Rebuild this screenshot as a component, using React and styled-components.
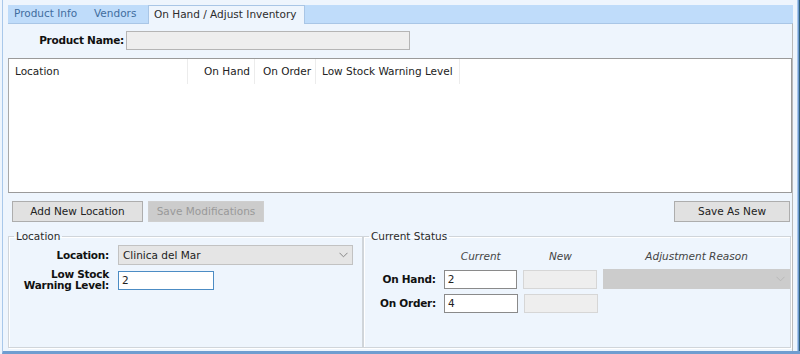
import styled, { createGlobalStyle } from 'styled-components';

const GlobalStyle = createGlobalStyle`
    html, body {
        margin: 0;
        padding: 0;
        background: #eef5fd;
    }
    body {
        font-family: "DejaVu Sans", Verdana, sans-serif;
        font-size: 10.5px;
        color: #262626;
    }
`;

const Frame = styled.div`
    width: 798px;
    height: 354px;
    box-sizing: border-box;
    background: #eef5fd;
    border-left: 1px solid #a9c8ea;
    border-bottom: 3px solid #6f9dd0;
    margin-left: 2px;
    padding: 5px 7px 0 5px;
    display: flex;
    flex-direction: column;
    position: relative;
`;

const EdgeStripe = styled.div`
    position: absolute;
    right: 0;
    top: 0;
    bottom: 0;
    width: 3px;
    background: linear-gradient(to right, #a8c8ec 0, #a8c8ec 1px, #6d9ad0 1px, #6d9ad0 2px, #2f5f78 2px);
`;

const TabStrip = styled.div`
    display: flex;
    align-items: flex-end;
    height: 18px;
    background: #bfdcfa;
`;

const Tab = styled.div`
    width: ${(p) => p.$width}px;
    height: ${(p) => (p.$active ? '19px' : '18px')};
    box-sizing: border-box;
    padding-left: ${(p) => (p.$active ? '5px' : '6px')};
    white-space: nowrap;
    line-height: 17px;
    color: ${(p) => (p.$active ? '#2c2c2c' : '#3f6d9e')};
    background: ${(p) => (p.$active ? '#eef5fd' : 'transparent')};
    border: ${(p) => (p.$active ? '1px solid #a9c6e6' : 'none')};
    border-bottom: none;
    margin-bottom: ${(p) => (p.$active ? '-1px' : '0')};
    position: relative;
`;

const Panel = styled.div`
    flex: 1;
    border-top: 1px solid #a9c6e6;
    border-right: 1px solid #b9b9b9;
    display: flex;
    flex-direction: column;
    padding-bottom: 3px;
`;

const NameRow = styled.div`
    display: flex;
    align-items: center;
    height: 18px;
    margin-top: 7px;
    margin-bottom: 9px;
`;

const FieldLabel = styled.label`
    font-weight: bold;
    letter-spacing: -0.25px;
    text-align: right;
    width: ${(p) => p.$width}px;
    padding-right: 2px;
    box-sizing: border-box;
    line-height: 11px;
    color: #111;
`;

const TextBox = styled.div`
    box-sizing: border-box;
    width: ${(p) => p.$width}px;
    height: 19px;
    border: 1px solid ${(p) => (p.$focus ? '#4c8cc4' : p.$disabled ? '#d6d6d6' : '#8a8a8a')};
    background: ${(p) => (p.$disabled ? '#eeeeee' : '#ffffff')};
    padding: 0 3px;
    line-height: 17px;
    color: #222;
`;

const NameBox = styled(TextBox)`
    border-color: #b5b5b5;
`;

const Grid = styled.div`
    height: 135px;
    box-sizing: border-box;
    background: #ffffff;
    border: 1px solid #9a9a9a;
    border-left-color: #a8a8a8;
`;

const HeaderRow = styled.div`
    display: flex;
    height: 25px;
`;

const HeaderCell = styled.div`
    width: ${(p) => p.$width}px;
    box-sizing: border-box;
    border-right: 1px solid #ececec;
    text-align: ${(p) => (p.$right ? 'right' : 'left')};
    padding: 0 ${(p) => (p.$right ? '4px' : '6px')};
    line-height: 25px;
    white-space: nowrap;
    color: #222;
`;

const ButtonRow = styled.div`
    display: flex;
    gap: 5px;
    padding: 0 2px 0 4px;
    margin-top: 8px;
`;

const Button = styled.div`
    box-sizing: border-box;
    width: ${(p) => p.$width}px;
    height: 21px;
    line-height: 19px;
    text-align: center;
    border: 1px solid ${(p) => (p.$disabled ? '#cfcfcf' : '#adadad')};
    background: ${(p) => (p.$disabled ? '#cccccc' : '#e1e1e1')};
    color: ${(p) => (p.$disabled ? '#999999' : '#222')};
    ${(p) => (p.$push ? 'margin-left: auto;' : '')}
`;

const Sections = styled.div`
    flex: 1;
    display: flex;
    margin-top: 9px;
`;

const Fieldset = styled.fieldset`
    margin: 0;
    padding: 0;
    flex: 0 0 ${(p) => p.$width}px;
    box-sizing: border-box;
    border: 1px solid #d0d5da;
    box-shadow: inset 1px 1px 0 #ffffff, 1px 1px 0 #ffffff;
    min-width: 0;
    display: flex;
    flex-direction: column;

    & legend {
        padding: 0 2px;
        margin-left: 5px;
        color: #2a2a2a;
        line-height: 11px;
    }
`;

const FormRow = styled.div`
    display: flex;
    align-items: center;
    gap: ${(p) => p.$gap || 0}px;
    margin-top: ${(p) => p.$top || 0}px;
`;

const Select = styled.div`
    box-sizing: border-box;
    width: ${(p) => p.$width}px;
    height: 20px;
    border: 1px solid ${(p) => (p.$disabled ? '#cccccc' : '#c2c2c2')};
    background: ${(p) => (p.$disabled ? '#cccccc' : '#e5e5e5')};
    display: flex;
    align-items: center;
    justify-content: space-between;
    padding: 0 4px;
    color: #222;
`;

const Chevron = ({ color }) => (
    <svg width="9" height="6" viewBox="0 0 9 6">
        <path d="M0.5 0.8 L4.5 4.8 L8.5 0.8" fill="none" stroke={color} strokeWidth="1" />
    </svg>
);

const ColHeads = styled.div`
    display: flex;
    gap: 6px;
    padding-left: 80px;
    margin-top: 8px;
    margin-bottom: 7px;
`;

const ColHead = styled.div`
    width: ${(p) => p.$width}px;
    text-align: center;
    font-style: italic;
    color: #444;
`;

const App = () => {
    return (
        <>
            <GlobalStyle />
            <Frame>
                <TabStrip>
                    <Tab $width={80}>Product Info</Tab>
                    <Tab $width={60}>Vendors</Tab>
                    <Tab $width={157} $active>On Hand / Adjust Inventory</Tab>
                </TabStrip>
                <Panel>
                    <NameRow>
                        <FieldLabel $width={118}>Product Name:</FieldLabel>
                        <NameBox $width={284} $disabled />
                    </NameRow>
                    <Grid>
                        <HeaderRow>
                            <HeaderCell $width={179}>Location</HeaderCell>
                            <HeaderCell $width={67} $right>On Hand</HeaderCell>
                            <HeaderCell $width={61} $right>On Order</HeaderCell>
                            <HeaderCell $width={144}>Low Stock Warning Level</HeaderCell>
                        </HeaderRow>
                    </Grid>
                    <ButtonRow>
                        <Button $width={131}>Add New Location</Button>
                        <Button $width={116} $disabled>Save Modifications</Button>
                        <Button $width={116} $push>Save As New</Button>
                    </ButtonRow>
                    <Sections>
                        <Fieldset $width={355}>
                            <legend>Location</legend>
                            <FormRow $gap={7} $top={3}>
                                <FieldLabel $width={102}>Location:</FieldLabel>
                                <Select $width={235}>
                                    <span>Clinica del Mar</span>
                                    <Chevron color="#888" />
                                </Select>
                            </FormRow>
                            <FormRow $gap={7} $top={4}>
                                <FieldLabel $width={102}>
                                    Low Stock
                                    <br />
                                    Warning Level:
                                </FieldLabel>
                                <TextBox $width={96} $focus>2</TextBox>
                            </FormRow>
                        </Fieldset>
                        <Fieldset $width={428}>
                            <legend>Current Status</legend>
                            <ColHeads>
                                <ColHead $width={74}>Current</ColHead>
                                <ColHead $width={74}>New</ColHead>
                                <ColHead $width={188}>Adjustment Reason</ColHead>
                            </ColHeads>
                            <FormRow $gap={6}>
                                <FieldLabel $width={74}>On Hand:</FieldLabel>
                                <TextBox $width={74}>2</TextBox>
                                <TextBox $width={74} $disabled />
                                <Select $width={188} $disabled>
                                    <span />
                                    <Chevron color="#b8b8b8" />
                                </Select>
                            </FormRow>
                            <FormRow $gap={6} $top={5}>
                                <FieldLabel $width={74}>On Order:</FieldLabel>
                                <TextBox $width={74}>4</TextBox>
                                <TextBox $width={74} $disabled />
                            </FormRow>
                        </Fieldset>
                    </Sections>
                </Panel>
                <EdgeStripe />
            </Frame>
        </>
    );
};

export default App;
